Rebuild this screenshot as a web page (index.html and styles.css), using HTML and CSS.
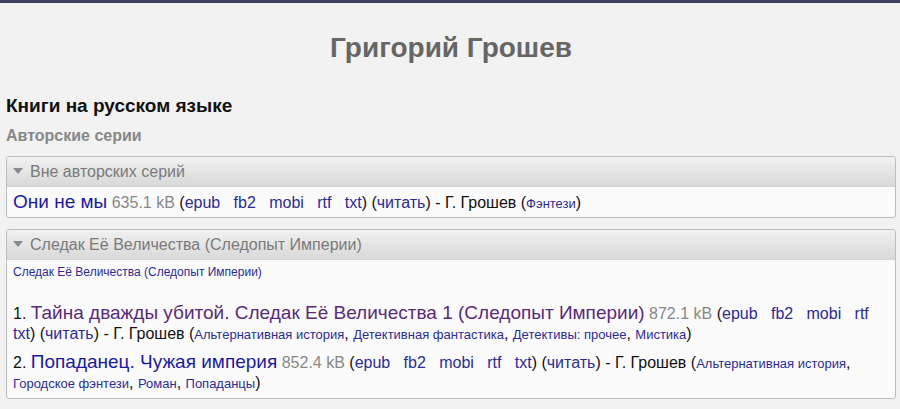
FILE: index.html
```html
<!DOCTYPE html>
<html lang="ru">
<head>
<meta charset="utf-8">
<title>Григорий Грошев</title>
<link rel="stylesheet" href="styles.css">
</head>
<body>
<div class="topbar"></div>
<main class="page">
  <h1 class="author">Григорий Грошев</h1>
  <h2 class="lang">Книги на русском языке</h2>
  <h3 class="series-kind">Авторские серии</h3>

  <section class="panel">
    <div class="panel-head"><span class="tri"></span>Вне авторских серий</div>
    <div class="panel-body single">
      <p class="book"><a class="title" href="#">Они не мы</a> <span class="size">635.1 kB</span> (<a href="#">epub</a>&nbsp;&nbsp; <a href="#">fb2</a>&nbsp;&nbsp; <a href="#">mobi</a>&nbsp;&nbsp; <a href="#">rtf</a>&nbsp;&nbsp; <a href="#">txt</a>) (<a href="#">читать</a>) - Г. Грошев (<a class="genre" href="#">Фэнтези</a>)</p>
    </div>
  </section>

  <section class="panel">
    <div class="panel-head"><span class="tri"></span>Следак Её Величества (Следопыт Империи)</div>
    <div class="panel-body">
      <p class="series-link"><a href="#">Следак Её Величества (Следопыт Империи)</a></p>
      <p class="book numbered">1. <a class="title visited" href="#">Тайна дважды убитой. Следак Её Величества 1 (Следопыт Империи)</a> <span class="size">872.1 kB</span> (<a href="#">epub</a>&nbsp;&nbsp; <a href="#">fb2</a>&nbsp;&nbsp; <a href="#">mobi</a>&nbsp;&nbsp; <a href="#">rtf</a>&nbsp;&nbsp; <a href="#">txt</a>) (<a href="#">читать</a>) - Г. Грошев (<a class="genre" href="#">Альтернативная история</a>, <a class="genre" href="#">Детективная фантастика</a>, <a class="genre" href="#">Детективы: прочее</a>, <a class="genre" href="#">Мистика</a>)</p>
      <p class="book numbered">2. <a class="title" href="#">Попаданец. Чужая империя</a> <span class="size">852.4 kB</span> (<a href="#">epub</a>&nbsp;&nbsp; <a href="#">fb2</a>&nbsp;&nbsp; <a href="#">mobi</a>&nbsp;&nbsp; <a href="#">rtf</a>&nbsp;&nbsp; <a href="#">txt</a>) (<a href="#">читать</a>) - Г. Грошев (<a class="genre" href="#">Альтернативная история</a>, <a class="genre" href="#">Городское фэнтези</a>, <a class="genre" href="#">Роман</a>, <a class="genre" href="#">Попаданцы</a>)</p>
    </div>
  </section>
</main>
</body>
</html>
```

FILE: styles.css
```css
html, body {
  margin: 0;
  padding: 0;
}
body {
  background: #f2f2f2;
  font-family: "Liberation Sans", Arial, sans-serif;
  color: #222;
}
.topbar {
  height: 3px;
  background: #3c405e;
}
.page {
  padding: 0 4px 0 6px;
}
.author {
  margin: 0;
  padding-top: 29px;
  height: 48px;
  text-align: center;
  font-size: 28px;
  line-height: 32px;
  font-weight: bold;
  color: #666;
}
.lang {
  margin: 0;
  padding-top: 15px;
  font-size: 19px;
  line-height: 22px;
  font-weight: bold;
  color: #111;
}
.series-kind {
  margin: 0;
  padding-top: 9px;
  font-size: 16px;
  line-height: 20px;
  font-weight: bold;
  color: #888;
}
.panel {
  border: 1px solid #bdbdbd;
  border-radius: 3px;
  background: #fbfbfb;
}
.series-kind + .panel {
  margin-top: 10px;
}
.panel + .panel {
  margin-top: 11px;
}
.panel-head {
  height: 29px;
  line-height: 29px;
  padding-left: 6px;
  font-size: 16px;
  color: #7a7a7a;
  background: linear-gradient(#f1f1f1, #d9d9d9);
  border-bottom: 1px solid #d6d6d6;
  border-radius: 3px 3px 0 0;
}
.tri {
  display: inline-block;
  width: 0;
  height: 0;
  border-left: 5px solid transparent;
  border-right: 5px solid transparent;
  border-top: 6px solid #8a8a8a;
  margin-right: 7px;
  vertical-align: 3px;
}
.panel-body {
  padding: 4px 6px 5px;
}
.panel-body.single {
  padding: 6px 6px 4px;
}
.book {
  margin: 0;
  font-size: 16px;
  line-height: 20px;
  color: #111;
}
.book a,
.book span {
  line-height: 14px;
}
a {
  color: #2b2b96;
  text-decoration: none;
}
.title {
  font-size: 19px;
  color: #1a1aa0;
}
.title.visited {
  color: #5a2a7a;
}
.size {
  font-size: 16px;
  color: #888;
}
.genre {
  font-size: 13px;
}
.series-link {
  margin: 0;
  font-size: 12px;
  line-height: 16px;
}
.series-link a {
  color: #2b2b96;
}
.numbered {
  margin-top: 24px;
}
.numbered + .numbered {
  margin-top: 9px;
}
```
